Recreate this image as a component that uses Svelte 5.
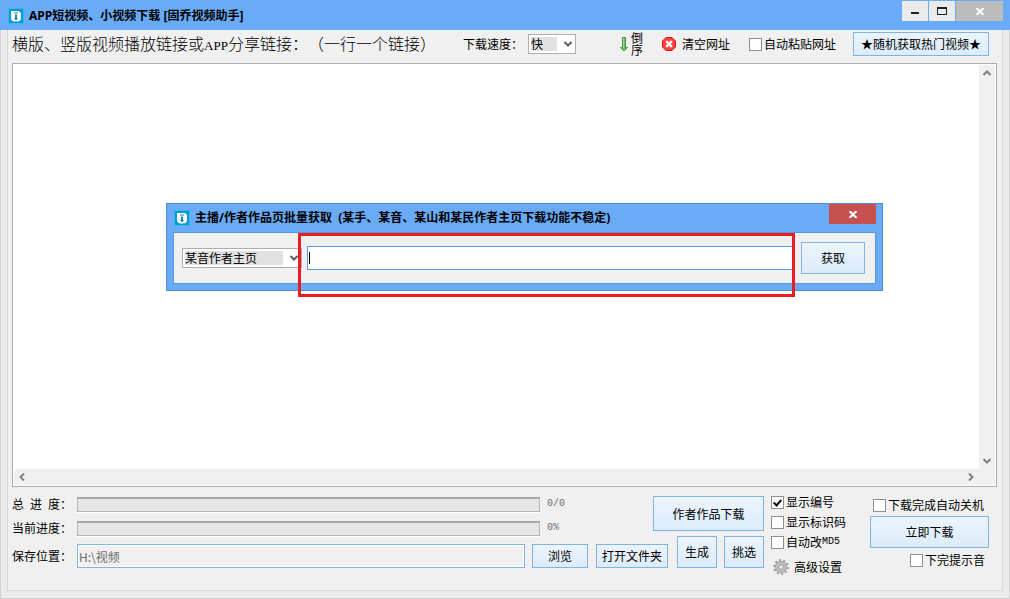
<script lang="ts">
  let links = $state('')
  let speed = $state('快')
  let autoPaste = $state(false)
  let site = $state('某音作者主页')
  let author = $state('')
  let savePath = $state('H:\\视频')
  let dialogOpen = $state(true)
  let total = $state({ done: 0, all: 0 })
  let current = $state(0)
  let shutdown = $state(false)
  let sound = $state(false)

  let options = $state([
    { id: 'number', label: '显示编号', mono: '', checked: true },
    { id: 'code', label: '显示标识码', mono: '', checked: false },
    { id: 'md5', label: '自动改', mono: 'MD5', checked: false }
  ])

  const totalPercent = $derived(total.all ? (total.done / total.all) * 100 : 0)
</script>

{#snippet logo()}
  <svg class="logo" viewBox="0 0 16 16" aria-hidden="true">
    <rect width="16" height="16" rx="1" fill="#35b9ea" />
    <rect x="1" y="1" width="14" height="14" fill="#0a9bd6" />
    <path d="M3 3h8l2 2v4.5a4 4 0 0 1-4 4H7a4 4 0 0 1-4-4z" fill="#fff" />
    <path d="M6 4.5h4v1H6zM7 6.5h2v3.5h1.3L8 12.3 5.7 10H7z" fill="#1f7fbd" />
  </svg>
{/snippet}

{#snippet chevron(dir: string)}
  <svg class="chevron {dir}" viewBox="0 0 8 8" aria-hidden="true">
    <path d="M0.5 2 4 5.5 7.5 2" fill="none" stroke="currentColor" stroke-width="2" />
  </svg>
{/snippet}

<div class="window">
  <header class="titlebar">
    {@render logo()}
    <h1>APP短视频、小视频下载 [固乔视频助手]</h1>
    <div class="caption">
      <button aria-label="最小化">
        <svg width="10" height="10"><path d="M1 7h8" stroke="#222" stroke-width="2" /></svg>
      </button>
      <button aria-label="最大化">
        <svg width="10" height="8"><path d="M0.5 0v8M9.5 0v8M0 7.5h10" fill="none" stroke="#222" /><path d="M0 1h10" stroke="#222" stroke-width="2" /></svg>
      </button>
      <button class="close" aria-label="关闭">
        <svg width="8" height="7"><path d="M0.5 0l7 7M7.5 0l-7 7" stroke="#fff" stroke-width="2" /></svg>
      </button>
    </div>
  </header>

  <div class="frame">
    <main>
      <div class="toolbar">
        <label class="heading" for="links">横版、竖版视频播放链接或<span class="latin">APP</span>分享链接：（一行一个链接）</label>
        <div class="speed">
          <label for="speed">下载速度：</label>
          <span class="select">
            <select id="speed" bind:value={speed}>
              <option>快</option>
              <option>中</option>
              <option>慢</option>
            </select>
            {@render chevron('down')}
          </span>
        </div>
        <button class="plain order">
          <svg width="8" height="16" viewBox="0 0 8 16" aria-hidden="true">
            <path d="M2.5 1.5h3v10h2L4 15 0.5 11.5h2z" fill="#6cbb62" stroke="#4c9447" />
            <path d="M3.5 2v10" stroke="#9ed796" />
          </svg>
          <span class="stacked">倒序</span>
        </button>
        <button class="plain clear">
          <svg width="14" height="14" viewBox="0 0 14 14" aria-hidden="true">
            <path d="M4 0.5h6L13.5 4v6L10 13.5H4L0.5 10V4z" fill="#f5443e" stroke="#ec1010" />
            <path d="M4.2 4.2l5.6 5.6M9.8 4.2l-5.6 5.6" stroke="#fff" stroke-width="2.4" />
          </svg>
          清空网址
        </button>
        <label class="check paste"><input type="checkbox" bind:checked={autoPaste} />自动粘贴网址</label>
        <button class="btn hot">★随机获取热门视频★</button>
      </div>

      <div class="editor">
        <textarea id="links" wrap="off" bind:value={links}></textarea>
        <div class="vbar">
          <button aria-label="向上滚动">{@render chevron('up')}</button>
          <button aria-label="向下滚动">{@render chevron('down')}</button>
        </div>
        <div class="hbar">
          <button aria-label="向左滚动">{@render chevron('left')}</button>
          <button aria-label="向右滚动">{@render chevron('right')}</button>
        </div>
      </div>

      <div class="bottom">
        <div class="jobs">
          <div class="upper">
            <div class="progress-list">
              <div class="progress">
                <span class="name">总&ensp;进&ensp;度：</span>
                <div class="track"><div class="bar" style="width: {totalPercent}%"></div></div>
                <span class="value mono">{total.done}/{total.all}</span>
              </div>
              <div class="progress">
                <span class="name">当前进度：</span>
                <div class="track"><div class="bar" style="width: {current}%"></div></div>
                <span class="value mono">{current}%</span>
              </div>
            </div>
            <button class="btn author" onclick={() => (dialogOpen = true)}>作者作品下载</button>
          </div>
          <div class="lower">
            <label class="name" for="path">保存位置：</label>
            <input id="path" type="text" readonly value={savePath} />
            <button class="btn browse">浏览</button>
            <button class="btn folder">打开文件夹</button>
            <button class="btn small">生成</button>
            <button class="btn small">挑选</button>
          </div>
        </div>

        <div class="options">
          {#each options as option (option.id)}
            <label class="check">
              <input type="checkbox" bind:checked={option.checked} />{option.label}{#if option.mono}<span class="mono">{option.mono}</span>{/if}
            </label>
          {/each}
          <button class="plain advanced">
            <svg width="16" height="16" viewBox="0 0 16 16" aria-hidden="true">
              <circle cx="8" cy="8" r="6.7" fill="none" stroke="#a3a3a3" stroke-width="2.4" stroke-dasharray="2.1 2.1" />
              <circle cx="8" cy="8" r="4.4" fill="none" stroke="#bdbdbd" stroke-width="3.4" />
              <circle cx="8" cy="8" r="5.6" fill="none" stroke="#9c9c9c" stroke-width="0.7" />
              <circle cx="8" cy="8" r="2.3" fill="#f0f0f0" stroke="#929292" />
            </svg>
            高级设置
          </button>
        </div>

        <div class="start">
          <label class="check"><input type="checkbox" bind:checked={shutdown} />下载完成自动关机</label>
          <button class="btn now">立即下载</button>
          <label class="check sound"><input type="checkbox" bind:checked={sound} />下完提示音</label>
        </div>
      </div>
    </main>
  </div>

  {#if dialogOpen}
    <div class="dialog" role="dialog" aria-labelledby="dialog-title">
      <header>
        {@render logo()}
        <h2 id="dialog-title">主播/作者作品页批量获取&nbsp;&nbsp;(某手、某音、某山和某民作者主页下载功能不稳定)</h2>
        <button class="dismiss" aria-label="关闭" onclick={() => (dialogOpen = false)}>
          <svg width="8" height="7"><path d="M0.5 0l7 7M7.5 0l-7 7" stroke="#fff" stroke-width="2" /></svg>
        </button>
      </header>
      <div class="dialog-body">
        <span class="select site">
          <select aria-label="主页类型" bind:value={site}>
            <option>某音作者主页</option>
            <option>某手作者主页</option>
            <option>某山作者主页</option>
          </select>
          {@render chevron('down')}
        </span>
        <div class="field">
          <input type="text" aria-label="作者主页链接" bind:value={author} />
          <span class="caret"></span>
        </div>
        <button class="btn fetch">获取</button>
      </div>
      <div class="highlight"></div>
    </div>
  {/if}
</div>

<style>
  :global(body) {
    margin: 0;
  }

  .window {
    position: relative;
    display: flex;
    flex-direction: column;
    min-height: 100vh;
    background: #ebebeb;
    color: #000;
    font-family: 'Noto Sans CJK SC', sans-serif;
    font-size: 12px;
    line-height: 16px;
    text-spacing-trim: space-all;
  }

  .window *,
  .window {
    box-sizing: border-box;
  }

  button,
  input,
  select,
  textarea {
    margin: 0;
    padding: 0;
    border: 0;
    border-radius: 0;
    color: inherit;
    font: inherit;
    outline: none;
  }

  svg {
    display: block;
    flex: none;
  }

  h1,
  h2 {
    margin: 0;
    font-family: 'Open Sans', 'Noto Sans CJK SC', sans-serif;
    font-size: 12px;
    font-weight: 700;
    white-space: nowrap;
  }

  .mono {
    font-family: 'Liberation Mono', monospace;
    font-size: 10px;
  }

  .logo {
    width: 16px;
    height: 16px;
  }

  .titlebar {
    display: flex;
    align-items: center;
    gap: 5px;
    height: 30px;
    padding: 1px 7px 0 8px;
    background: #6aabf7;
  }

  .caption {
    display: flex;
    align-self: flex-start;
    gap: 1px;
    margin-left: auto;
  }

  .caption button {
    display: grid;
    place-items: center;
    width: 26px;
    height: 20px;
    background: #ebebeb;
  }

  .caption .close {
    width: 47px;
    background: #bcbcbc;
  }

  .frame {
    display: flex;
    flex: 1;
    padding: 0 6px 7px;
    border: 1px solid #d2d2d2;
    border-top: 0;
  }

  main {
    display: flex;
    flex: 1;
    flex-direction: column;
    min-width: 0;
    padding: 0 5px 0 4px;
    border: 1px solid #d9d9d9;
    border-top: 0;
    background: #f0f0f0;
  }

  .toolbar {
    display: flex;
    align-items: center;
    height: 28px;
    margin-bottom: 5px;
    padding-right: 8px;
    white-space: nowrap;
  }

  .heading {
    width: 451px;
    font-size: 16px;
    font-weight: 300;
  }

  .latin {
    font-family: 'Liberation Serif', serif;
    font-size: 13px;
  }

  .speed {
    display: flex;
    align-items: center;
    gap: 5px;
  }

  .select {
    position: relative;
    display: block;
    width: 48px;
    height: 20px;
  }

  select {
    width: 100%;
    height: 100%;
    padding: 0 20px 0 2px;
    border: 1px solid #abadb3;
    background: linear-gradient(#e1e1e1, #e1e1e1) 2px 2px / calc(100% - 20px) calc(100% - 4px) no-repeat #fff;
    appearance: none;
  }

  .select :global(.chevron) {
    position: absolute;
    top: 6px;
    right: 4px;
    pointer-events: none;
  }

  .chevron {
    width: 8px;
    height: 8px;
    color: #606060;
  }

  .up {
    rotate: 180deg;
  }

  .left {
    rotate: 90deg;
  }

  .right {
    rotate: 270deg;
  }

  .plain {
    display: flex;
    align-items: center;
    background: none;
  }

  .order {
    gap: 3px;
    margin-left: 44px;
  }

  .stacked {
    width: 12px;
    line-height: 12px;
    white-space: normal;
  }

  .clear {
    gap: 6px;
    margin-left: 19px;
  }

  .check {
    display: flex;
    align-items: center;
    white-space: nowrap;
  }

  .check input {
    position: relative;
    flex: none;
    width: 13px;
    height: 13px;
    margin-right: 2px;
    border: 1px solid #8e8f8f;
    background: #fff;
    appearance: none;
  }

  .check input:checked::after {
    position: absolute;
    top: 1px;
    left: 3px;
    width: 5px;
    height: 8px;
    border: solid #111;
    border-width: 0 2px 2px 0;
    box-sizing: border-box;
    content: '';
    rotate: 42deg;
  }

  .paste {
    margin-left: 19px;
  }

  .btn {
    flex: none;
    border: 1px solid #7eb4ea;
    background: linear-gradient(#ecf4fc, #dcecfc);
    white-space: nowrap;
  }

  .hot {
    width: 136px;
    height: 24px;
    margin-left: auto;
  }

  .editor {
    display: grid;
    flex: 1;
    grid-template: 1fr 16px / 1fr 16px;
    padding: 1px;
    border: 1px solid #abadb3;
    background: #fff;
  }

  .editor .chevron {
    color: #808080;
  }

  textarea {
    width: 100%;
    height: 100%;
    padding: 2px;
    overflow: hidden;
    background: #fff;
    resize: none;
  }

  .vbar,
  .hbar {
    display: flex;
    justify-content: space-between;
    background: #f0f0f0;
  }

  .vbar {
    flex-direction: column;
  }

  .hbar {
    grid-column: 1 / -1;
    padding-right: 16px;
  }

  .vbar button,
  .hbar button {
    display: grid;
    place-items: center;
    width: 16px;
    height: 16px;
    background: none;
  }

  .bottom {
    display: flex;
    padding: 5px 8px 15px 0;
  }

  .jobs {
    flex: 1;
    padding-top: 4px;
  }

  .upper {
    display: flex;
    justify-content: space-between;
    height: 40px;
  }

  .progress-list {
    display: flex;
    flex: 1;
    flex-direction: column;
    gap: 8px;
    margin-right: 80px;
  }

  .progress {
    display: flex;
    align-items: center;
  }

  .name {
    flex: none;
    width: 65px;
    white-space: pre;
  }

  .track {
    flex: 1;
    height: 15px;
    border: 1px solid #b4b4b4;
    border-top: 2px solid #a8a8a8;
    background: #e6e6e6;
    box-shadow: 0 1px #fff;
  }

  .bar {
    height: 100%;
    background: #06b025;
  }

  .value {
    width: 26px;
    margin-left: 7px;
    color: #6d6d6d;
  }

  .author {
    width: 111px;
    height: 35px;
  }

  .lower {
    display: flex;
    align-items: flex-end;
  }

  .lower .name {
    line-height: 24px;
  }

  .lower input {
    flex: 1;
    min-width: 0;
    height: 24px;
    margin-right: 7px;
    padding: 0 1px;
    border: 1px solid #7eb4ea;
    background: #f0f0f0;
    box-shadow: inset 0 0 0 1px #fff;
    color: #6d6d6d;
  }

  .browse {
    width: 56px;
    height: 24px;
    margin-right: 8px;
  }

  .folder {
    width: 72px;
    height: 24px;
    margin-right: 9px;
  }

  .small {
    width: 40px;
    height: 32px;
  }

  .small + .small {
    margin-left: 7px;
  }

  .options {
    width: 75px;
    margin: 0 24px 0 7px;
  }

  .options .check {
    height: 20px;
  }

  .advanced {
    gap: 5px;
    height: 16px;
    margin: 7px 0 0 2px;
    white-space: nowrap;
  }

  .start {
    width: 119px;
    padding-top: 4px;
  }

  .start .check {
    height: 20px;
    padding: 0 0 2px 3px;
  }

  .now {
    display: block;
    width: 100%;
    height: 32px;
  }

  .start .sound {
    justify-content: flex-end;
    height: 24px;
    padding: 0 4px 0 0;
  }

  .dialog {
    position: absolute;
    top: 203px;
    right: 127px;
    left: 166px;
    padding: 0 6px 6px;
    border: 1px solid #4f8fd4;
    background: #6aabf7;
  }

  .dialog header {
    display: flex;
    align-items: center;
    gap: 5px;
    height: 28px;
    padding-left: 1px;
  }

  .dismiss {
    display: grid;
    place-items: center;
    align-self: flex-start;
    width: 47px;
    height: 20px;
    margin-left: auto;
    background: #c75050;
  }

  .dialog-body {
    display: flex;
    align-items: center;
    height: 52px;
    padding: 0 10px 0 8px;
    border: 1px solid #5797de;
    background: #f0f0f0;
  }

  .site {
    width: 120px;
  }

  .field {
    position: relative;
    flex: 1;
    margin: 0 8px 0 5px;
  }

  .field input {
    display: block;
    width: 100%;
    height: 24px;
    padding: 0 2px;
    border: 1px solid #569de5;
    background: #fff;
  }

  .caret {
    position: absolute;
    top: 6px;
    left: 2px;
    width: 1px;
    height: 12px;
    background: #000;
  }

  .fetch {
    width: 64px;
    height: 32px;
  }

  .highlight {
    position: absolute;
    top: 29px;
    right: 87px;
    bottom: -7px;
    left: 131px;
    border: 3px solid #ed1c24;
    pointer-events: none;
  }
</style>
